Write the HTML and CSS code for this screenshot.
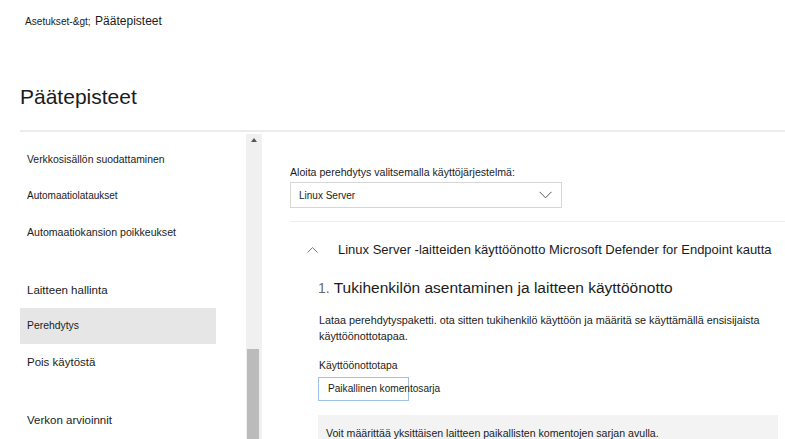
FILE: index.html
```html
<!DOCTYPE html>
<html lang="fi">
<head>
<meta charset="utf-8">
<title>Päätepisteet</title>
<link rel="stylesheet" href="styles.css">
</head>
<body>
<header class="top">
  <div class="crumb"><span class="crumb-small">Asetukset-&amp;gt;</span> <span class="crumb-main">Päätepisteet</span></div>
  <h1 class="title">Päätepisteet</h1>
</header>
<div class="main">
  <nav class="nav">
    <div class="group">
      <div class="item s-a">Verkkosisällön suodattaminen</div>
      <div class="item s-b">Automaatiolataukset</div>
      <div class="item s-c">Automaatiokansion poikkeukset</div>
    </div>
    <div class="group">
      <div class="item s-d">Laitteen hallinta</div>
      <div class="item s-a selected">Perehdytys</div>
      <div class="item s-d">Pois käytöstä</div>
    </div>
    <div class="group">
      <div class="item s-d">Verkon arvioinnit</div>
    </div>
  </nav>
  <div class="scrollbar">
    <div class="arrow"></div>
    <div class="track"></div>
    <div class="thumb"></div>
  </div>
  <section class="content">
    <div class="os-label">Aloita perehdytys valitsemalla käyttöjärjestelmä:</div>
    <div class="select">
      <span>Linux Server</span>
      <svg class="chev" width="13" height="8" viewBox="0 0 13 8"><polyline points="0.5,0.8 6.5,6.8 12.5,0.8" fill="none" stroke="#555" stroke-width="1"/></svg>
    </div>
    <div class="divider"></div>
    <div class="acc-head">
      <svg class="chev-up" width="11" height="6" viewBox="0 0 11 6"><polyline points="0.5,5.5 5.5,0.6 10.5,5.5" fill="none" stroke="#777" stroke-width="1"/></svg>
      <span>Linux Server -laitteiden käyttöönotto Microsoft Defender for Endpoint kautta</span>
    </div>
    <div class="acc-body">
      <h2 class="step"><span class="num">1.</span> Tukihenkilön asentaminen ja laitteen käyttöönotto</h2>
      <p class="desc">Lataa perehdytyspaketti. ota sitten tukihenkilö käyttöön ja määritä se käyttämällä ensisijaista käyttöönottotapaa.</p>
      <div class="method-label">Käyttöönottotapa</div>
      <div class="method"><span>Paikallinen komentosarja</span></div>
      <div class="info">Voit määrittää yksittäisen laitteen paikallisten komentojen sarjan avulla.</div>
    </div>
  </section>
</div>
</body>
</html>
```
FILE: styles.css
```css
html, body {
  margin: 0;
  padding: 0;
  background: #fff;
  color: #1b1b1b;
  font-family: "Liberation Sans", Arial, sans-serif;
  overflow: hidden;
  height: 439px;
}
.top {
  padding-left: 20px;
}
.crumb {
  height: 20px;
  padding-top: 10px;
  padding-left: 5px;
  line-height: 20px;
}
.crumb-small {
  font-size: 10.1px;
}
.crumb-main {
  font-size: 12px;
}
.title {
  margin: 0;
  font-size: 21px;
  font-weight: normal;
  line-height: 24px;
  padding-top: 55px;
  box-sizing: border-box;
  height: 100px;
}
.main {
  margin-left: 20px;
  border-top: 2px solid #ececec;
  display: flex;
  height: 310px;
}
.nav {
  width: 226px;
  padding-top: 10px;
  display: flex;
  flex-direction: column;
  gap: 22px;
}
.group {
  display: flex;
  flex-direction: column;
}
.item {
  height: 36px;
  line-height: 36px;
  padding-left: 7px;
  width: 189px;
  white-space: nowrap;
}
.s-a { font-size: 10.4px; }
.s-b { font-size: 10px; }
.s-c { font-size: 10.6px; }
.s-d { font-size: 11.5px; }
.selected {
  background: #e6e6e6;
}
.scrollbar {
  width: 15px;
  margin-top: 2px;
  background: #f0f0f0;
  display: flex;
  flex-direction: column;
}
.arrow {
  width: 0;
  height: 0;
  margin: 4px auto 0;
  border-left: 3.5px solid transparent;
  border-right: 3.5px solid transparent;
  border-bottom: 4px solid #555;
}
.track {
  height: 207px;
}
.thumb {
  margin-left: 1px;
  width: 12px;
  flex: 1;
  background: #bbbbbb;
}
.content {
  flex: 1;
  padding-left: 28px;
  padding-top: 32px;
  border-left: 1px solid #f2f2f2;
}
.os-label {
  font-size: 10.6px;
  line-height: 16px;
  height: 18px;
}
.select {
  box-sizing: border-box;
  width: 272px;
  height: 26px;
  border: 1px solid #d6d6d6;
  display: flex;
  align-items: center;
  justify-content: space-between;
  padding: 0 9px 0 8px;
  font-size: 10px;
}
.chev {
  display: block;
}
.divider {
  margin-top: 13px;
  border-top: 1px solid #eeeeee;
}
.acc-head {
  display: flex;
  align-items: center;
  height: 27px;
  margin-top: 14px;
  padding-left: 17px;
  font-size: 13px;
  white-space: nowrap;
}
.chev-up {
  display: block;
  margin-right: 20px;
}
.acc-body {
  padding-left: 28px;
}
.step {
  margin: 0;
  margin-top: 13px;
  font-size: 15.5px;
  font-weight: normal;
  line-height: 24px;
  white-space: nowrap;
}
.num {
  color: #6a6a6a;
  font-size: 14px;
}
.desc {
  margin: 12px 0 0 1px;
  width: 445px;
  font-size: 10.8px;
  line-height: 16px;
}
.method-label {
  margin-top: 14px;
  margin-left: 1px;
  font-size: 10.4px;
  line-height: 16px;
}
.method {
  box-sizing: border-box;
  margin-top: 3px;
  width: 91px;
  height: 24px;
  border: 1px solid #9dc2e6;
  font-size: 10.1px;
  line-height: 22px;
  padding-left: 9px;
  white-space: nowrap;
  overflow: visible;
}
.info {
  margin-top: 14px;
  width: 452px;
  height: 30px;
  background: #f3f3f3;
  padding-left: 8px;
  font-size: 10.6px;
  line-height: 36px;
}
```
